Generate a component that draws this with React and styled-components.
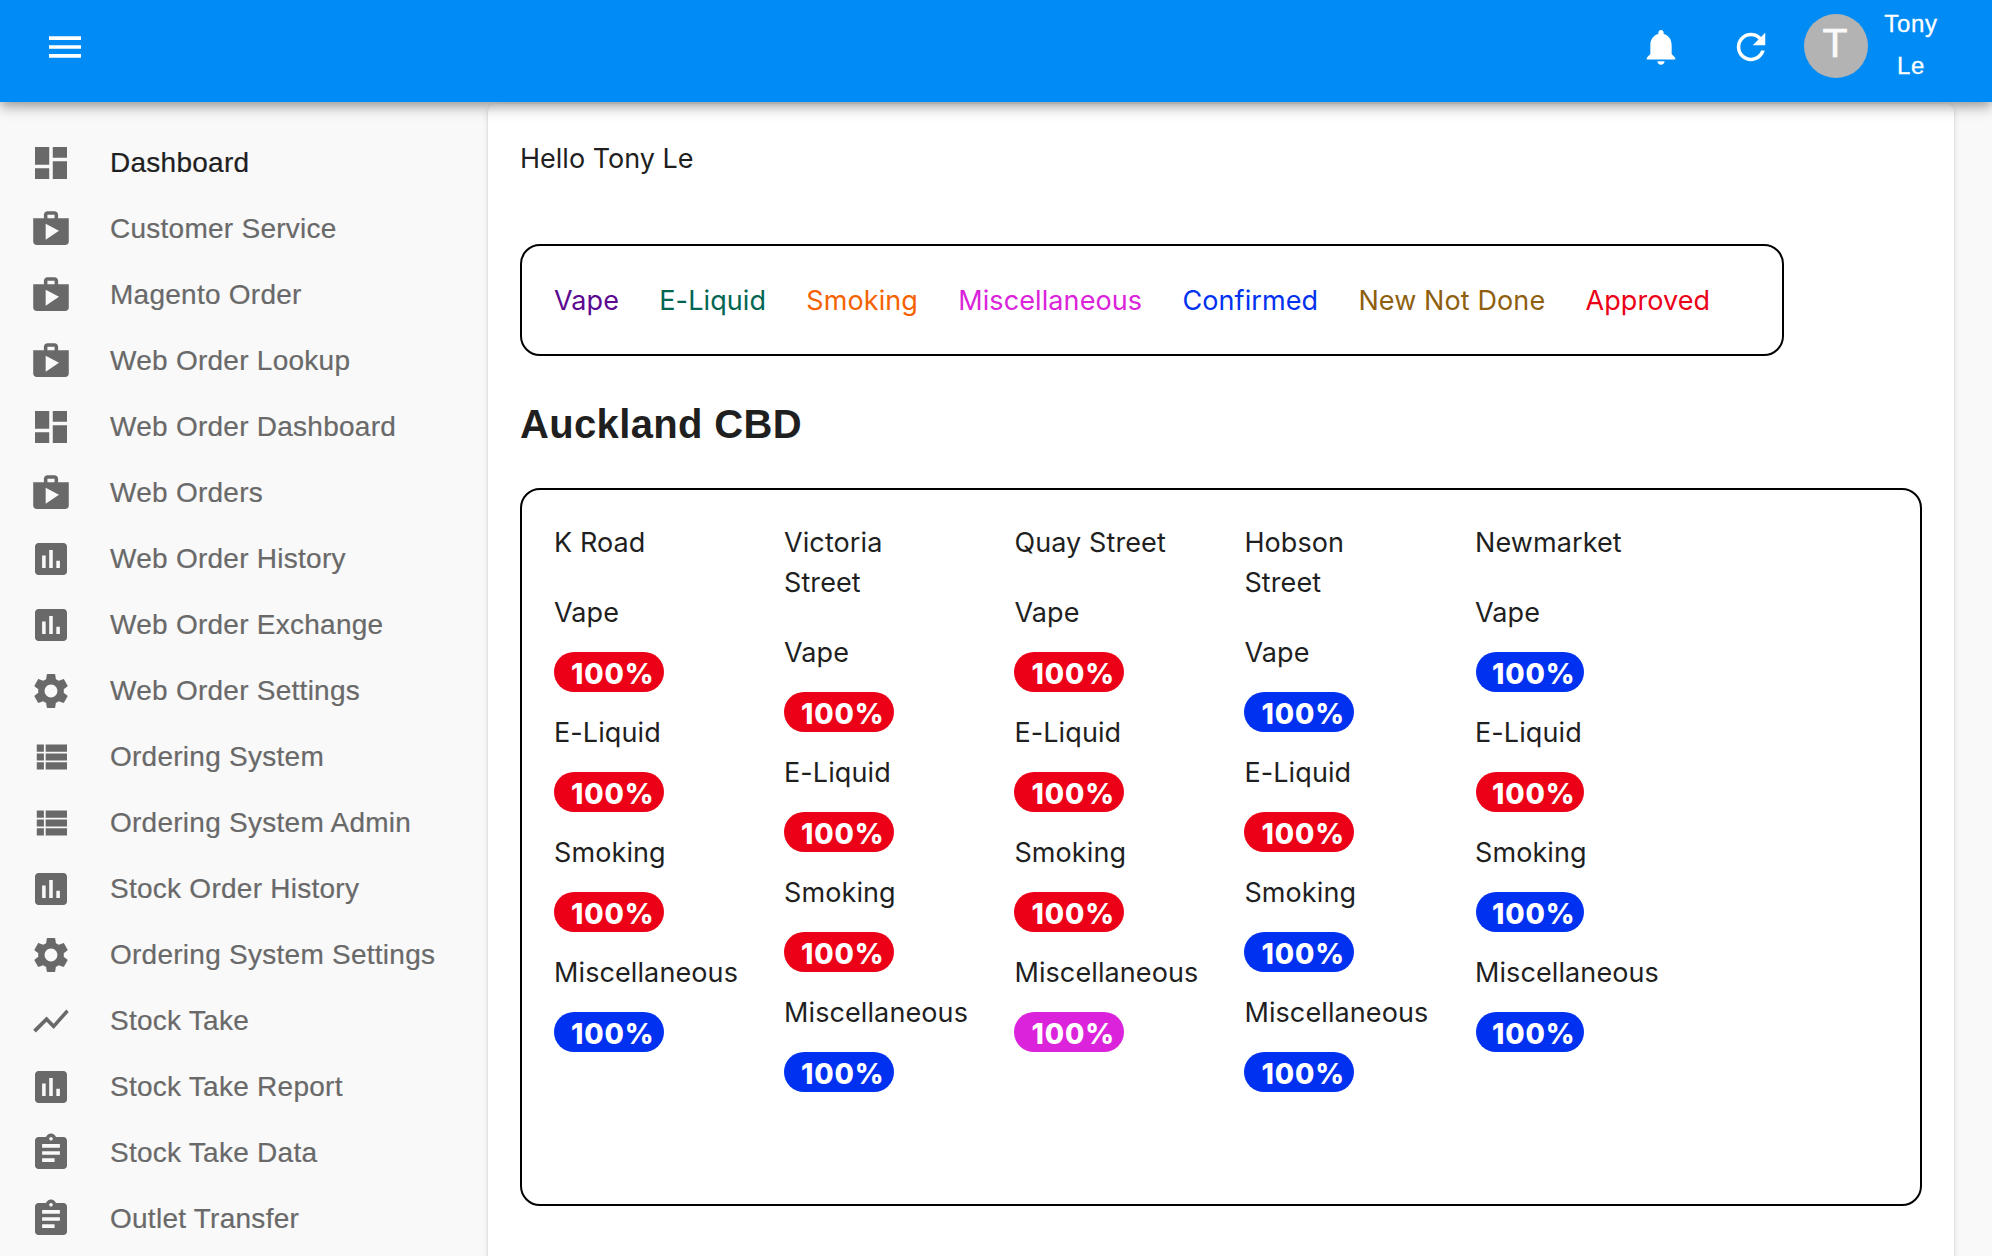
import React from 'react';
import styled, { createGlobalStyle } from 'styled-components';

const HELVETICA = '"Liberation Sans", Helvetica, Arial, sans-serif';
const SYSTEM = 'Inter, "Liberation Sans", sans-serif';

const colors = {
  red: '#eb0017',
  blue: '#0031f0',
  magenta: '#db23db',
  text: '#1f1f1f',
};

const GlobalStyle = createGlobalStyle`
  *, *::before, *::after { box-sizing: border-box; }
  body { margin: 0; background: #f9f9f9; color: ${colors.text}; }
`;

const Page = styled.div`
  height: 1256px;
  overflow: hidden;
  display: flex;
  flex-direction: column;
  background: #f9f9f9;
`;

const Header = styled.header`
  position: relative;
  z-index: 1;
  flex: none;
  height: 102px;
  padding: 0 54px 8px 44px;
  display: flex;
  align-items: center;
  background: #008cf4;
  color: #fff;
  font-family: ${HELVETICA};
  box-shadow: 0 4px 8px -2px rgba(0, 0, 0, 0.2), 0 8px 10px rgba(0, 0, 0, 0.14),
    0 2px 20px rgba(0, 0, 0, 0.12);
`;

const Icon = styled.svg`
  display: block;
  flex: none;
  width: 42px;
  height: 42px;
  fill: currentColor;
`;

const HeaderActions = styled.div`
  margin-left: auto;
  display: flex;
  align-items: center;
  gap: 48px;
`;

const Account = styled.div`
  margin-left: 32px;
  display: flex;
  align-items: center;
  gap: 16px;
`;

const Avatar = styled.div`
  width: 64px;
  height: 64px;
  margin-bottom: 2px;
  padding-right: 2px;
  border-radius: 50%;
  background: #b3b3b3;
  color: #fafafa;
  font-size: 41px;
  line-height: 59px;
  text-align: center;
  -webkit-text-stroke: 0.6px currentColor;
`;

const UserName = styled.div`
  width: 54px;
  margin-bottom: 4px;
  font-size: 24px;
  line-height: 42px;
  letter-spacing: 0.686px;
  text-align: center;
  -webkit-text-stroke: 0.3px currentColor;
`;

const Body = styled.div`
  flex: 1;
  min-height: 0;
  display: flex;
`;

const Sidebar = styled.nav`
  flex: none;
  width: 488px;
  padding-top: 28px;
  font-family: ${HELVETICA};
`;

const NavItem = styled.a`
  display: flex;
  align-items: center;
  gap: 38px;
  height: 66px;
  padding-left: 30px;
  color: #696969;
`;

const NavLabel = styled.span`
  font-size: 28px;
  line-height: 40px;
  letter-spacing: 0.26px;
  white-space: nowrap;
  -webkit-text-stroke: 0.2px currentColor;
  color: ${(p) => (p.$active ? colors.text : 'inherit')};
`;

const Paper = styled.main`
  width: 1466px;
  height: 1300px;
  margin-top: 2px;
  padding: 35px 32px;
  border-radius: 8px;
  background: #fff;
  font-family: ${SYSTEM};
  font-size: 27px;
  line-height: 40px;
  letter-spacing: 0.1px;
  box-shadow: 0 4px 2px -2px rgba(0, 0, 0, 0.2), 0 2px 2px rgba(0, 0, 0, 0.14),
    0 2px 6px rgba(0, 0, 0, 0.12);
`;

const Greeting = styled.p`
  margin: 0 0 65px;
  letter-spacing: 0;
`;

const Frame = styled.section`
  border: 2px solid #000;
  border-radius: 20px;
`;

const Legend = styled(Frame)`
  width: 1264px;
  padding: 35px 32px 33px;
  display: flex;
  gap: 40.2px;
  white-space: nowrap;
`;

const LegendItem = styled.span`
  color: ${(p) => p.$color};
`;

const RegionTitle = styled.h2`
  margin: 36px 0 32px;
  font: bold 40px/64px ${HELVETICA};
  letter-spacing: 0.35px;
`;

const StoreGrid = styled(Frame)`
  height: 718px;
  padding: 33px 32px 31px;
  display: grid;
  grid-template-columns: 230px 230.4px 230px 230.6px 230px;
`;

const Store = styled.div`
  padding-right: 38px;
`;

const StoreName = styled.div`
  padding-right: 24px;
  margin-bottom: 30px;
`;

const Metric = styled.div`
  margin-bottom: 21px;
  white-space: nowrap;
`;

const Pill = styled.div`
  width: ${(p) => (p.$narrow ? 108 : 110)}px;
  height: 40px;
  margin: 19px 0 0 ${(p) => (p.$narrow ? 1 : 0)}px;
  padding-left: ${(p) => (p.$narrow ? 16 : 17)}px;
  border-radius: 20px;
  background: ${(p) => p.$color};
  color: #fff;
  font-size: 28px;
  font-weight: 800;
  line-height: 44px;
  letter-spacing: 0.9px;
`;

const paths = {
  menu: 'M3 18h18v-2H3v2zm0-5h18v-2H3v2zm0-7v2h18V6H3z',
  bell: 'M12 22c1.1 0 2-.9 2-2h-4c0 1.1.89 2 2 2zm6-6v-5c0-3.07-1.64-5.64-4.5-6.32V4c0-.83-.67-1.5-1.5-1.5s-1.5.67-1.5 1.5v.68C7.63 5.36 6 7.92 6 11v5l-2 2v1h16v-1l-2-2z',
  refresh:
    'M17.65 6.35C16.2 4.9 14.21 4 12 4c-4.42 0-7.99 3.58-7.99 8s3.57 8 7.99 8c3.73 0 6.84-2.55 7.73-6h-2.08c-.82 2.33-3.04 4-5.65 4-3.31 0-6-2.69-6-6s2.69-6 6-6c1.66 0 3.14.69 4.22 1.78L13 11h7V4l-2.35 2.35z',
  dashboard: 'M3 13h8V3H3v10zm0 8h8v-6H3v6zm10 0h8V11h-8v10zm0-18v6h8V3h-8z',
  shop: 'M16 6V4c0-1.11-.89-2-2-2h-4c-1.11 0-2 .89-2 2v2H2v13c0 1.11.89 2 2 2h16c1.11 0 2-.89 2-2V6h-6zm-6-2h4v2h-4V4zM9 18V9l7.5 4L9 18z',
  chart:
    'M19 3H5c-1.1 0-2 .9-2 2v14c0 1.1.9 2 2 2h14c1.1 0 2-.9 2-2V5c0-1.1-.9-2-2-2zM9 17H7v-7h2v7zm4 0h-2V7h2v10zm4 0h-2v-4h2v4z',
  settings:
    'M19.14 12.94c.04-.3.06-.61.06-.94 0-.32-.02-.64-.07-.94l2.03-1.58c.18-.14.23-.41.12-.61l-1.92-3.32c-.12-.22-.37-.29-.59-.22l-2.39.96c-.5-.38-1.03-.7-1.62-.94l-.36-2.54c-.04-.24-.24-.41-.48-.41h-3.84c-.24 0-.43.17-.47.41l-.36 2.54c-.59.24-1.13.57-1.62.94l-2.39-.96c-.22-.08-.47 0-.59.22L2.74 8.87c-.12.21-.08.47.12.61l2.03 1.58c-.05.3-.09.63-.09.94s.02.64.07.94l-2.03 1.58c-.18.14-.23.41-.12.61l1.92 3.32c.12.22.37.29.59.22l2.39-.96c.5.38 1.03.7 1.62.94l.36 2.54c.05.24.24.41.48.41h3.84c.24 0 .44-.17.47-.41l.36-2.54c.59-.24 1.13-.56 1.62-.94l2.39.96c.22.08.47 0 .59-.22l1.92-3.32c.12-.22.07-.47-.12-.61l-2.01-1.58zM12 15.6c-1.98 0-3.6-1.62-3.6-3.6s1.62-3.6 3.6-3.6 3.6 1.62 3.6 3.6-1.62 3.6-3.6 3.6z',
  list: 'M4 14h4v-4H4v4zm0 5h4v-4H4v4zM4 9h4V5H4v4zm5 5h12v-4H9v4zm0 5h12v-4H9v4zM9 5v4h12V5H9z',
  trend: 'M3.5 18.49l6-6.01 4 4L22 6.92l-1.41-1.41-7.09 7.97-4-4L2 16.99z',
  clipboard:
    'M19 3h-4.18C14.4 1.84 13.3 1 12 1c-1.3 0-2.4.84-2.82 2H5c-1.1 0-2 .9-2 2v14c0 1.1.9 2 2 2h14c1.1 0 2-.9 2-2V5c0-1.1-.9-2-2-2zm-7 0c.55 0 1 .45 1 1s-.45 1-1 1-1-.45-1-1 .45-1 1-1zm2 14H7v-2h7v2zm3-4H7v-2h10v2zm0-4H7V7h10v2z',
};

const nav = [
  ['Dashboard', 'dashboard'],
  ['Customer Service', 'shop'],
  ['Magento Order', 'shop'],
  ['Web Order Lookup', 'shop'],
  ['Web Order Dashboard', 'dashboard'],
  ['Web Orders', 'shop'],
  ['Web Order History', 'chart'],
  ['Web Order Exchange', 'chart'],
  ['Web Order Settings', 'settings'],
  ['Ordering System', 'list'],
  ['Ordering System Admin', 'list'],
  ['Stock Order History', 'chart'],
  ['Ordering System Settings', 'settings'],
  ['Stock Take', 'trend'],
  ['Stock Take Report', 'chart'],
  ['Stock Take Data', 'clipboard'],
  ['Outlet Transfer', 'clipboard'],
];

const legend = [
  ['Vape', '#5c0a91'],
  ['E-Liquid', '#006651'],
  ['Smoking', '#f56200'],
  ['Miscellaneous', colors.magenta],
  ['Confirmed', colors.blue],
  ['New Not Done', '#8f5f10'],
  ['Approved', colors.red],
];

const categories = ['Vape', 'E-Liquid', 'Smoking', 'Miscellaneous'];

const stores = [
  ['K Road', ['red', 'red', 'red', 'blue']],
  ['Victoria Street', ['red', 'red', 'red', 'blue']],
  ['Quay Street', ['red', 'red', 'red', 'magenta']],
  ['Hobson Street', ['blue', 'red', 'blue', 'blue']],
  ['Newmarket', ['blue', 'red', 'blue', 'blue']],
];

const Glyph = ({ name }) => (
  <Icon viewBox="0.1875 0.1875 23.625 23.625" aria-hidden="true">
    <path d={paths[name]} />
  </Icon>
);

export default function App() {
  return (
    <Page>
      <GlobalStyle />
      <Header>
        <Glyph name="menu" />
        <HeaderActions>
          <Glyph name="bell" />
          <Glyph name="refresh" />
        </HeaderActions>
        <Account>
          <Avatar>T</Avatar>
          <UserName>Tony Le</UserName>
        </Account>
      </Header>
      <Body>
        <Sidebar>
          {nav.map(([label, icon], i) => (
            <NavItem key={label}>
              <Glyph name={icon} />
              <NavLabel $active={i === 0}>{label}</NavLabel>
            </NavItem>
          ))}
        </Sidebar>
        <Paper>
          <Greeting>Hello Tony Le</Greeting>
          <Legend>
            {legend.map(([label, color]) => (
              <LegendItem key={label} $color={color}>
                {label}
              </LegendItem>
            ))}
          </Legend>
          <RegionTitle>Auckland CBD</RegionTitle>
          <StoreGrid>
            {stores.map(([name, levels], col) => (
              <Store key={name}>
                <StoreName>
                  {name}
                </StoreName>
                {categories.map((category, i) => (
                  <Metric key={category}>
                    {category}
                    <Pill $color={colors[levels[i]]} $narrow={col === 4}>
                      100%
                    </Pill>
                  </Metric>
                ))}
              </Store>
            ))}
          </StoreGrid>
        </Paper>
      </Body>
    </Page>
  );
}
